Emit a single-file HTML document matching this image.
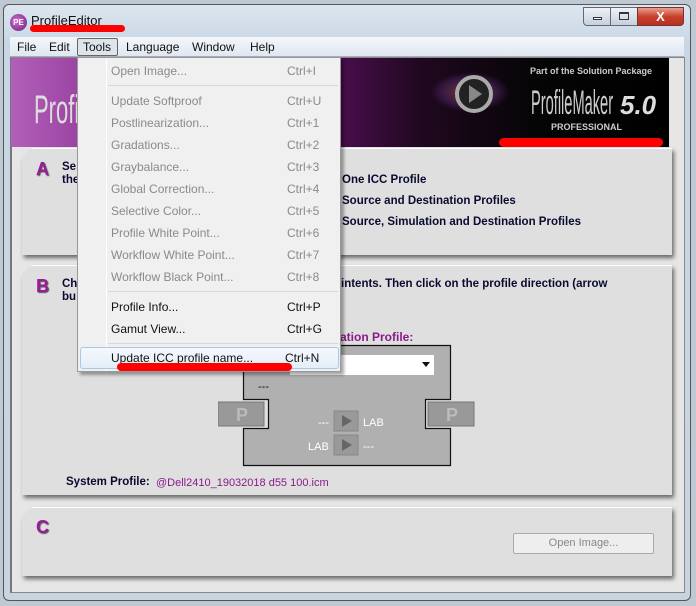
<!DOCTYPE html>
<html><head><meta charset="utf-8"><style>
*{margin:0;padding:0;box-sizing:border-box}
body{width:696px;height:606px;overflow:hidden;background:#bfc9d4;font-family:"Liberation Sans",sans-serif;position:relative}
.a{position:absolute}
.mi{position:absolute;left:33px;font-size:12px;color:#8a8a8a}
.sc{position:absolute;left:209px;font-size:12px;color:#8a8a8a}
.en{color:#111}
.pw{position:absolute;filter:drop-shadow(2px 3px 2px rgba(0,0,0,.55))}
.panel{width:100%;height:100%;background:#dfdfdf;border-top:1px solid #fff;clip-path:polygon(10px 0,100% 0,100% 100%,0 100%,0 10px)}
.letter{position:absolute;font-weight:bold;font-size:18px;color:#9a1a9a;text-shadow:1px 1px 1px #555}
.bt{font-size:11.5px;font-weight:bold;color:#0a0a30;position:absolute;white-space:nowrap}
</style></head><body>
<div class="a" style="left:3px;top:4px;width:688px;height:597px;border:1px solid #555;border-radius:6px;background:linear-gradient(#dce6f0,#c8d6e4 40px,#c8d4e0)"></div>
<div class="a" style="left:10px;top:14px;width:17px;height:17px;border-radius:50%;background:radial-gradient(circle at 40% 40%,#d070d0,#6a1a7a);color:#fff;font-size:8px;font-weight:bold;text-align:center;line-height:17px">PE</div>
<div class="a" style="left:31px;top:13px;font-size:13px;color:#111">ProfileEditor</div>
<div class="a" style="left:30px;top:25px;width:95px;height:7px;background:#f00;border-radius:4px"></div>
<div class="a" style="left:583px;top:7px;width:28px;height:19px;border:1px solid #667;border-radius:0 0 0 4px;background:linear-gradient(#eef2f6,#c6d0dc)"></div>
<div class="a" style="left:593px;top:17px;width:9px;height:3px;border:1px solid #334;background:#fff"></div>
<div class="a" style="left:610px;top:7px;width:28px;height:19px;border:1px solid #667;background:linear-gradient(#eef2f6,#c6d0dc)"></div>
<div class="a" style="left:619px;top:12px;width:10px;height:8px;border:1px solid #334;border-top-width:2px"></div>
<div class="a" style="left:637px;top:7px;width:47px;height:19px;border:1px solid #733;border-radius:0 0 4px 0;background:linear-gradient(#e8a090,#c8402c 50%,#b83020);color:#fff;font-weight:bold;font-size:13px;text-align:center;line-height:18px">X</div>
<div class="a" style="left:10px;top:37px;width:674px;height:20px;background:linear-gradient(#f4f7fb,#dfe7f1);border-bottom:1px solid #aab"></div>
<div class="a" style="left:17px;top:40px;font-size:12px;color:#111">File</div>
<div class="a" style="left:49px;top:40px;font-size:12px;color:#111">Edit</div>
<div class="a" style="left:77px;top:38px;width:41px;height:18px;border:1px solid #666;border-radius:2px;background:#dde4ec"></div>
<div class="a" style="left:83px;top:40px;font-size:12px;color:#111">Tools</div>
<div class="a" style="left:126px;top:40px;font-size:12px;color:#111">Language</div>
<div class="a" style="left:192px;top:40px;font-size:12px;color:#111">Window</div>
<div class="a" style="left:250px;top:40px;font-size:12px;color:#111">Help</div>
<div class="a" style="left:10px;top:57px;width:675px;height:536px;background:#e6e6e6;border:1px solid #888;border-left:2px solid #777"></div>
<div class="a" style="left:11px;top:58px;width:658px;height:89px;background:linear-gradient(90deg,#b060b8 0%,#8a2a90 20%,#5a1060 45%,#200820 62%,#050505 80%,#000)"></div>
<div class="a" style="left:34px;top:88px;font-size:40px;color:#ddd;transform:scaleX(.55);transform-origin:left">ProfileEditor</div>
<div class="a" style="left:430px;top:72px;width:80px;height:40px;border-radius:50%;background:radial-gradient(ellipse,rgba(220,120,80,.5),rgba(120,60,160,.3) 50%,transparent 70%)"></div>
<div class="a" style="left:455px;top:75px;width:38px;height:38px;border-radius:50%;border:4px solid #aaa;background:#222"></div>
<div class="a" style="left:469px;top:85px;border:9px solid transparent;border-left:13px solid #888;border-right:0"></div>
<div class="a" style="left:530px;top:66px;font-size:9px;font-weight:bold;color:#ccc">Part of the Solution Package</div>
<div class="a" style="left:531px;top:84px;font-size:34px;color:#ccc;transform:scaleX(.43);transform-origin:left">ProfileMaker</div>
<div class="a" style="left:620px;top:90px;font-size:26px;font-weight:bold;font-style:italic;color:#ddd">5.0</div>
<div class="a" style="left:551px;top:122px;font-size:9px;font-weight:bold;color:#ccc">PROFESSIONAL</div>
<div class="a" style="left:499px;top:138px;width:164px;height:9px;background:#f00;border-radius:5px"></div>

<div class="pw" style="left:22px;top:148px;width:650px;height:107px"><div class="panel"></div></div>
<div class="letter" style="left:36px;top:159px">A</div>
<div class="bt" style="left:62px;top:161px">Se</div><div class="bt" style="left:62px;top:174px">the</div>
<div class="bt" style="left:342px;top:174px">One ICC Profile</div>
<div class="bt" style="left:342px;top:195px">Source and Destination Profiles</div>
<div class="bt" style="left:342px;top:216px">Source, Simulation and Destination Profiles</div>

<div class="pw" style="left:22px;top:265px;width:650px;height:230px"><div class="panel"></div></div>
<div class="letter" style="left:36px;top:276px">B</div>
<div class="bt" style="left:62px;top:278px">Ch</div><div class="bt" style="left:62px;top:291px">bu</div>
<div class="bt" style="left:341px;top:278px">intents. Then click on the profile direction (arrow</div>
<div class="bt" style="left:340px;top:330px;color:#8a1a8a;font-size:12px">ation Profile:</div>
<svg class="a" style="left:218px;top:344px" width="260" height="124"><polygon points="25.5,1.5 232.5,1.5 232.5,55.5 207.5,55.5 207.5,84.5 232.5,84.5 232.5,121.5 25.5,121.5 25.5,84.5 50.5,84.5 50.5,55.5 25.5,55.5" fill="#b0b0b0" stroke="#111" stroke-width="1.2"/>
<rect x="0" y="58" width="46" height="24" fill="#999" stroke="#777"/><text x="18" y="77" font-size="18" font-weight="bold" fill="#bbb" font-family="Liberation Sans">P</text>
<rect x="210" y="58" width="46" height="24" fill="#999" stroke="#777"/><text x="228" y="77" font-size="18" font-weight="bold" fill="#bbb" font-family="Liberation Sans">P</text>
<rect x="116" y="67" width="24" height="20" fill="#999" stroke="#888"/><polygon points="124,71 124,83 134,77" fill="#666"/>
<rect x="116" y="91" width="24" height="20" fill="#999" stroke="#888"/><polygon points="124,95 124,107 134,101" fill="#666"/>
<text x="100" y="82" font-size="11" fill="#fff" font-family="Liberation Sans">---</text><text x="145" y="82" font-size="11" fill="#fff" font-family="Liberation Sans">LAB</text>
<text x="90" y="106" font-size="11" fill="#fff" font-family="Liberation Sans">LAB</text><text x="145" y="106" font-size="11" fill="#fff" font-family="Liberation Sans">---</text>
<text x="40" y="46" font-size="11" fill="#111" font-family="Liberation Sans">---</text></svg>
<div class="a" style="left:290px;top:355px;width:144px;height:20px;background:#fff"></div>
<div class="a" style="left:422px;top:362px;border:4px solid transparent;border-top:5px solid #111"></div>
<div class="bt" style="left:66px;top:476px">System Profile:</div>
<div class="a" style="left:156px;top:477px;font-size:11px;color:#8a1a8a">@Dell2410_19032018 d55 100.icm</div>

<div class="pw" style="left:22px;top:507px;width:650px;height:69px"><div class="panel"></div></div>
<div class="letter" style="left:36px;top:517px">C</div>
<div class="a" style="left:513px;top:533px;width:141px;height:21px;border:1px solid #aaa;border-radius:2px;background:#eee;font-size:11px;color:#888;text-align:center;line-height:19px">Open Image...</div>

<div class="a" style="left:77px;top:57px;width:264px;height:315px;background:#f0f0f0;border:1px solid #999;box-shadow:3px 3px 3px rgba(0,0,0,.35)">
<div class="a" style="left:28px;top:0;width:1px;height:313px;background:#ddd;border-right:1px solid #fff"></div>
<div class="a" style="left:30px;top:27px;width:230px;height:1px;background:#d8d8d8"></div>
<div class="a" style="left:30px;top:233px;width:230px;height:1px;background:#d8d8d8"></div>
<div class="a" style="left:30px;top:285px;width:230px;height:1px;background:#d8d8d8"></div>
<div class="a" style="left:2px;top:289px;width:259px;height:22px;border:1px solid #a8c8e8;border-radius:3px;background:linear-gradient(#f4f8fc,#e4eef8)"></div>
<div class="mi" style="top:6px">Open Image...</div><div class="sc" style="top:6px">Ctrl+I</div>
<div class="mi" style="top:36px">Update Softproof</div><div class="sc" style="top:36px">Ctrl+U</div>
<div class="mi" style="top:58px">Postlinearization...</div><div class="sc" style="top:58px">Ctrl+1</div>
<div class="mi" style="top:80px">Gradations...</div><div class="sc" style="top:80px">Ctrl+2</div>
<div class="mi" style="top:102px">Graybalance...</div><div class="sc" style="top:102px">Ctrl+3</div>
<div class="mi" style="top:124px">Global Correction...</div><div class="sc" style="top:124px">Ctrl+4</div>
<div class="mi" style="top:146px">Selective Color...</div><div class="sc" style="top:146px">Ctrl+5</div>
<div class="mi" style="top:168px">Profile White Point...</div><div class="sc" style="top:168px">Ctrl+6</div>
<div class="mi" style="top:190px">Workflow White Point...</div><div class="sc" style="top:190px">Ctrl+7</div>
<div class="mi" style="top:212px">Workflow Black Point...</div><div class="sc" style="top:212px">Ctrl+8</div>
<div class="mi en" style="top:242px">Profile Info...</div><div class="sc en" style="top:242px">Ctrl+P</div>
<div class="mi en" style="top:264px">Gamut View...</div><div class="sc en" style="top:264px">Ctrl+G</div>
<div class="mi en" style="top:293px">Update ICC profile name...</div><div class="sc en" style="top:293px;left:207px">Ctrl+N</div>
</div>
<div class="a" style="left:117px;top:363px;width:175px;height:8px;background:#f00;border-radius:4px"></div>
</body></html>
